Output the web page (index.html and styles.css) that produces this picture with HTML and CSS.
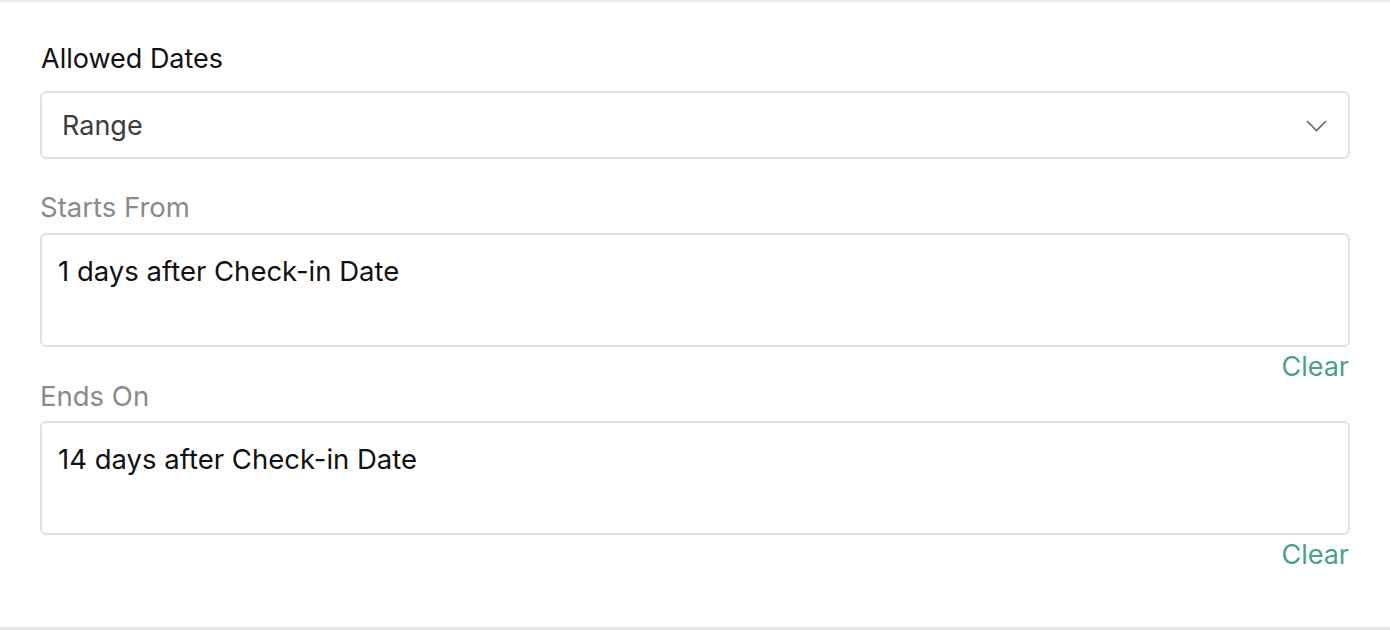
FILE: index.html
```html
<!DOCTYPE html>
<html lang="en">
<head>
    <meta charset="UTF-8">
    <title>Allowed Dates</title>
    <link rel="stylesheet" href="styles.css">
</head>
<body>
    <div class="panel">
        <!-- Allowed dates -->
        <label class="label label-main">Allowed Dates</label>
        <div class="select">
            <span class="select-value">Range</span>
            <svg class="chevron" width="21" height="12" viewBox="0 0 21 12">
                <path d="M1 1 L10.5 10.5 L20 1" fill="none" stroke="#666" stroke-width="1.6"/>
            </svg>
        </div>

        <!-- Starts from -->
        <label class="label label-muted">Starts From</label>
        <div class="field">1 days after Check-in Date</div>
        <div class="clear-row"><a class="clear">Clear</a></div>

        <!-- Ends on -->
        <label class="label label-muted label-tight">Ends On</label>
        <div class="field">14 days after Check-in Date</div>
        <div class="clear-row"><a class="clear">Clear</a></div>
    </div>
</body>
</html>
```

FILE: styles.css
```css
* {
    margin: 0;
    padding: 0;
    box-sizing: border-box;
    font-family: 'Inter', 'Noto Sans', sans-serif;
}
body {
    background: #fff;
    height: 630px;
    overflow: hidden;
}

.panel {
    border-top: 2px solid #e8e8e8;
    border-bottom: 3px solid #e8e8e8;
    height: 630px;
    padding: 0 40px;
}

/* Labels */
.label {
    display: block;
    font-size: 27.5px;
    line-height: 32px;
}
.label-main {
    font-size: 27px;
    color: #111;
    margin-top: 41px;
    margin-bottom: 16px;
    padding-left: 1px;
}
.label-muted {
    color: #8a8a8a;
    margin-top: 32px;
    margin-bottom: 10px;
}
.label-tight {
    margin-top: 0;
    margin-bottom: 9px;
}

/* Select */
.select {
    height: 68px;
    border: 2px solid #e1e1e1;
    border-radius: 6px;
    display: flex;
    align-items: center;
    justify-content: space-between;
    padding: 0 21px 0 20px;
}
.select-value {
    font-size: 27px;
    color: #3d3d3d;
}
.chevron {
    margin-top: 2px;
}

/* Text fields */
.field {
    height: 114px;
    border: 2px solid #e1e1e1;
    border-radius: 6px;
    padding: 20px 16px;
    font-size: 27.5px;
    line-height: 32px;
    color: #111;
}

.clear-row {
    display: flex;
    justify-content: flex-end;
    padding-top: 4px;
    height: 33px;
}
.clear {
    font-size: 27px;
    line-height: 32px;
    color: #4aa283;
    cursor: pointer;
    margin-right: 1px;
}
```
